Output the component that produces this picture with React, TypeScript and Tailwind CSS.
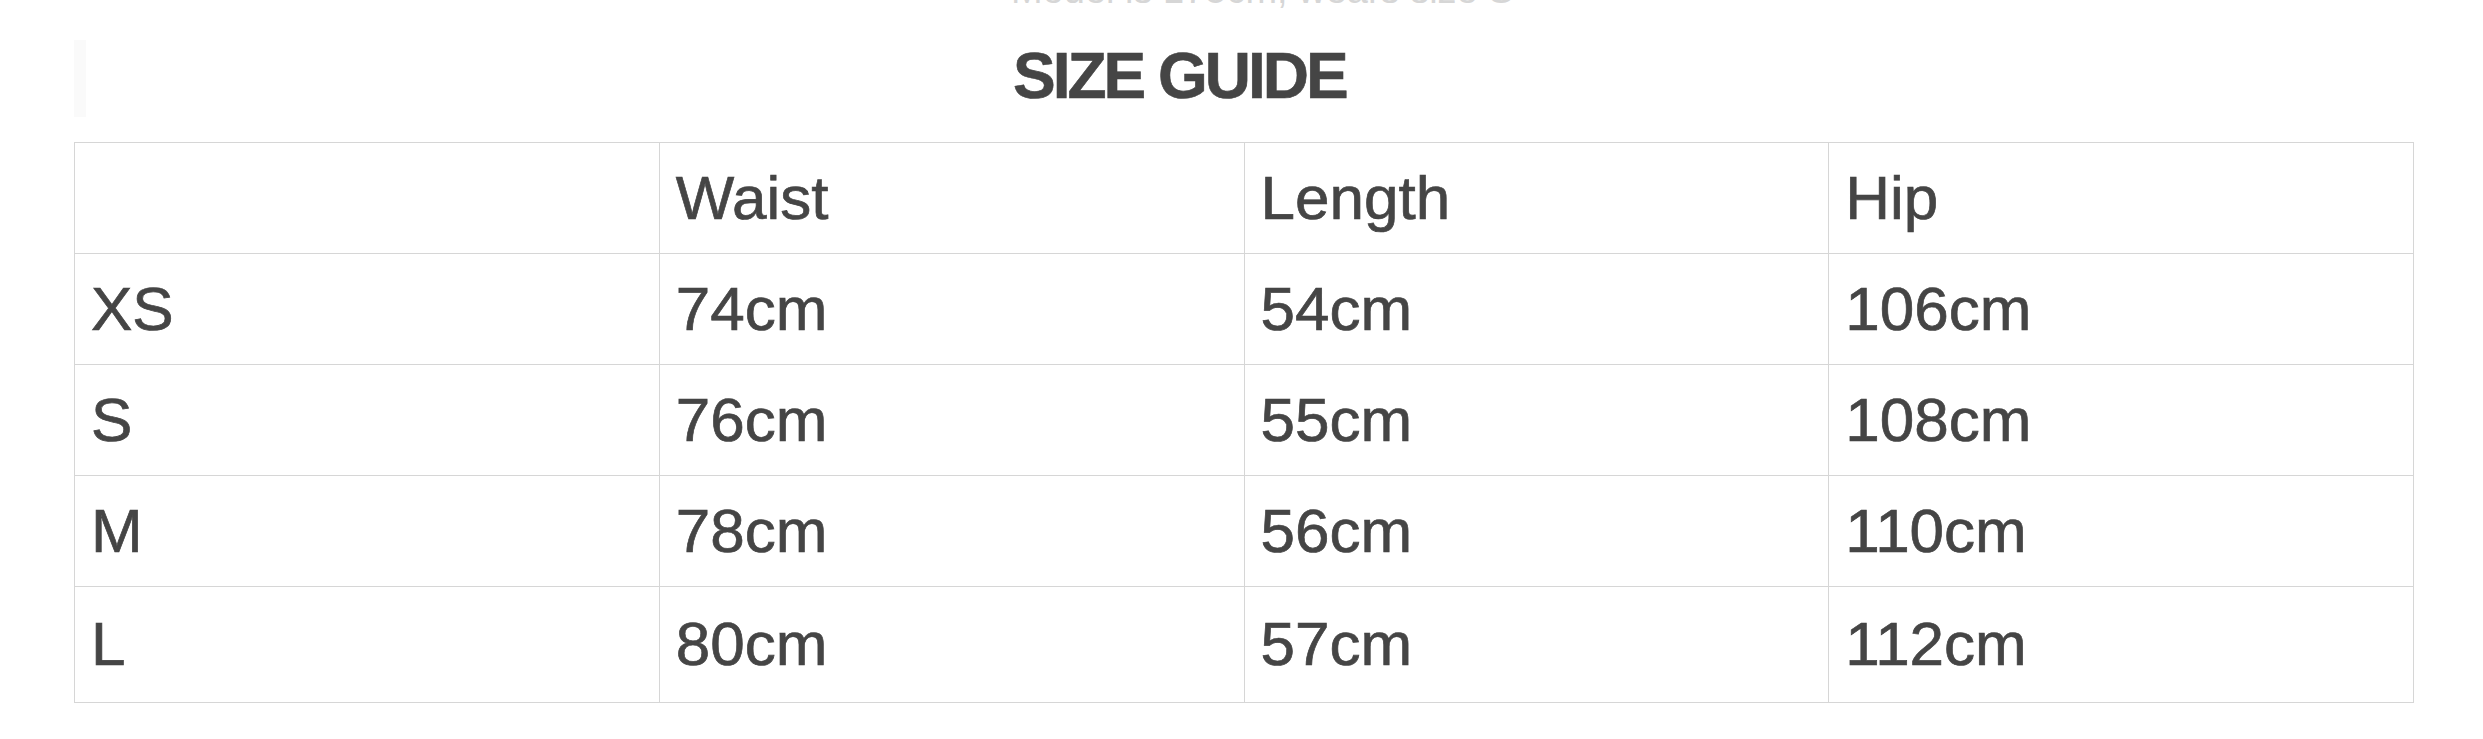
const header = ['', 'Waist', 'Length', 'Hip']

const rows = [
  ['XS', '74cm', '54cm', '106cm'],
  ['S', '76cm', '55cm', '108cm'],
  ['M', '78cm', '56cm', '110cm'],
  ['L', '80cm', '57cm', '112cm'],
]

const Cell = ({ children, last }: { children?: string; last?: boolean }) => (
  <div
    className={
      last
        ? 'flex h-[116px] items-start border-r border-b border-[#d6d6d6] pt-[22px] pl-4'
        : 'flex h-[111px] items-center border-r border-b border-[#d6d6d6] pl-4'
    }
  >
    {children}
  </div>
)

export default function App() {
  return (
    <div className="min-h-[739px] bg-white pl-[74px] font-['Liberation_Sans',Arial,sans-serif] text-[#454545]">
      <div className="flex h-[142px] flex-col">
        <div className="-mt-[30px] h-[40px] pl-[937px] text-[38px] leading-[40px] text-[#d6d6d6]">
          Model is 175cm, wears size S
        </div>
        <div className="flex">
          <div className="mt-[30px] h-[77px] w-[12px] bg-[#fafafa]" />
          <h1 className="mt-[34px] pl-[927px] text-[64px] leading-[64px] font-bold tracking-[-3px] [-webkit-text-stroke:0.6px_#454545]">
            SIZE GUIDE
          </h1>
        </div>
      </div>

      <div className="grid w-[2340px] grid-cols-4 border-t border-l border-[#d6d6d6] text-[62px] leading-[70px] [-webkit-text-stroke:0.7px_#454545]">
        {header.map((h, i) => (
          <Cell key={'h' + i}>{h}</Cell>
        ))}
        {rows.map((row, r) =>
          row.map((c, i) => (
            <Cell key={r + '-' + i} last={r === rows.length - 1}>
              {c}
            </Cell>
          ))
        )}
      </div>
    </div>
  )
}
